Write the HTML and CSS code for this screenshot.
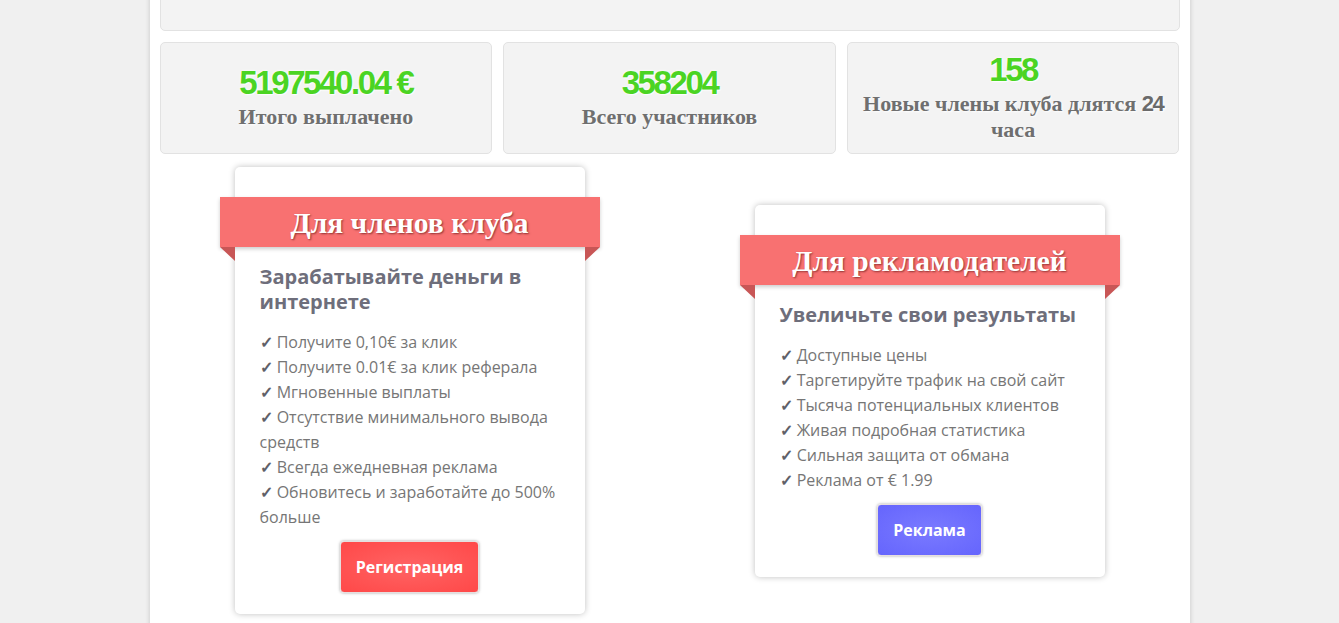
FILE: index.html
```html
<!DOCTYPE html>
<html lang="ru">
<head>
<meta charset="utf-8">
<title>Club</title>
<link rel="stylesheet" href="styles.css">
</head>
<body>
<div class="page">
  <div class="top-box"></div>
  <div class="stats">
    <div class="stat">
      <div class="stat-num">5197540.04 €</div>
      <div class="stat-label">Итого выплачено</div>
    </div>
    <div class="stat">
      <div class="stat-num">358204</div>
      <div class="stat-label">Всего участников</div>
    </div>
    <div class="stat">
      <div class="stat-num">158</div>
      <div class="stat-label">Новые члены клуба длятся <span class="stat-inline">24</span> часа</div>
    </div>
  </div>
  <div class="offers">
    <div class="col">
      <div class="card">
        <div class="ribbon">Для членов клуба</div>
        <h3 class="card-title">Зарабатывайте деньги в интернете</h3>
        <ul class="features">
          <li><span class="tick">✓</span> Получите 0,10€ за клик</li>
          <li><span class="tick">✓</span> Получите 0.01€ за клик реферала</li>
          <li><span class="tick">✓</span> Мгновенные выплаты</li>
          <li><span class="tick">✓</span> Отсутствие минимального вывода средств</li>
          <li><span class="tick">✓</span> Всегда ежедневная реклама</li>
          <li><span class="tick">✓</span> Обновитесь и заработайте до 500% больше</li>
        </ul>
        <div class="btn-row"><a class="btn btn-red" href="#">Регистрация</a></div>
      </div>
    </div>
    <div class="col">
      <div class="card">
        <div class="ribbon">Для рекламодателей</div>
        <h3 class="card-title">Увеличьте свои результаты</h3>
        <ul class="features">
          <li><span class="tick">✓</span> Доступные цены</li>
          <li><span class="tick">✓</span> Таргетируйте трафик на свой сайт</li>
          <li><span class="tick">✓</span> Тысяча потенциальных клиентов</li>
          <li><span class="tick">✓</span> Живая подробная статистика</li>
          <li><span class="tick">✓</span> Сильная защита от обмана</li>
          <li><span class="tick">✓</span> Реклама от € 1.99</li>
        </ul>
        <div class="btn-row"><a class="btn btn-blue" href="#">Реклама</a></div>
      </div>
    </div>
  </div>
</div>
</body>
</html>
```
FILE: styles.css
```css
html, body {
  margin: 0;
  padding: 0;
  background: #f0f0f0;
  font-family: "Open Sans", "Liberation Sans", sans-serif;
}
.page {
  width: 1040px;
  margin: 0 auto;
  background: #fff;
  min-height: 640px;
  padding: 0 10px;
  box-sizing: border-box;
  box-shadow: 0 0 5px rgba(0,0,0,0.18);
}
.top-box {
  margin-top: -10px;
  height: 41px;
  box-sizing: border-box;
  background: #f3f3f3;
  border: 1px solid #e2e2e2;
  border-radius: 5px;
}
.stats {
  margin-top: 11px;
  display: grid;
  grid-template-columns: 1fr 1fr 1fr;
  gap: 11px;
}
.stat {
  height: 112px;
  box-sizing: border-box;
  background: #f3f3f3;
  border: 1px solid #e2e2e2;
  border-radius: 5px;
  display: flex;
  flex-direction: column;
  align-items: center;
  justify-content: center;
  text-align: center;
  padding: 0 10px 3px;
}
.stat-num {
  font-family: "Liberation Sans", Arial, sans-serif;
  font-weight: bold;
  font-size: 33px;
  letter-spacing: -2.4px;
  line-height: 38px;
  margin-bottom: 2px;
  color: #4bd423;
  text-shadow: 0 0 3px rgba(255,255,255,0.9), 1px 1px 1px rgba(255,255,255,0.8);
}
.stat-label {
  font-family: "Liberation Serif", "Times New Roman", serif;
  font-weight: bold;
  font-size: 22px;
  line-height: 26px;
  color: #6f6f6f;
  text-shadow: 1px 1px 2px #fff;
}
.stat-inline {
  font-family: "Liberation Sans", Arial, sans-serif;
  letter-spacing: -1.5px;
  color: #6a6a6a;
}
.offers {
  margin-top: 13px;
  display: grid;
  grid-template-columns: 1fr 1fr;
  align-items: center;
  margin-left: -10px;
  margin-right: -10px;
}
.col {
  display: flex;
  justify-content: center;
}
.card {
  width: 350px;
  box-sizing: border-box;
  background: #fff;
  border-radius: 5px;
  box-shadow: 0 0 6px rgba(0,0,0,0.25);
  padding: 30px 25px 21px;
  margin-bottom: 8px;
}
.ribbon {
  position: relative;
  margin: 0 -40px;
  height: 50px;
  background: #f87171;
  color: #fff;
  font-family: "Liberation Serif", "Times New Roman", serif;
  font-weight: bold;
  font-size: 29.5px;
  line-height: 52px;
  text-align: center;
  text-shadow: 1px 1px 2px rgba(60,0,0,0.55);
  box-shadow: 0 2px 4px rgba(0,0,0,0.2);
}
.ribbon::before,
.ribbon::after {
  content: "";
  position: absolute;
  top: 50px;
  border-style: solid;
}
.ribbon::before {
  left: 0;
  border-width: 0 15px 14px 0;
  border-color: transparent #c85656 transparent transparent;
}
.ribbon::after {
  right: 0;
  border-width: 0 0 14px 15px;
  border-color: transparent transparent transparent #c85656;
}
.card-title {
  margin: 17px 0 0;
  font-size: 20px;
  line-height: 25px;
  font-weight: bold;
  color: #6e6e7b;
}
.features {
  list-style: none;
  margin: 16px 0 0;
  padding: 0;
  font-size: 16px;
  line-height: 25px;
  color: #767676;
}
.features li {
  margin: 0;
}
.tick {
  font-weight: bold;
  color: #606068;
}
.btn-row {
  margin-top: 11px;
  display: flex;
  justify-content: center;
}
.btn {
  display: block;
  height: 52px;
  box-sizing: border-box;
  padding: 0 15px;
  line-height: 50px;
  font-size: 16px;
  font-weight: bold;
  color: #fff;
  text-decoration: none;
  border-radius: 4px;
  border: 1px solid #e6dede;
  box-shadow: 0 0 3px rgba(0,0,0,0.35);
}
.btn-red {
  background: radial-gradient(ellipse at center, #ff6464 0%, #ff4848 100%);
}
.btn-blue {
  background: radial-gradient(ellipse at center, #7a7aff 0%, #6565fd 100%);
}
```
